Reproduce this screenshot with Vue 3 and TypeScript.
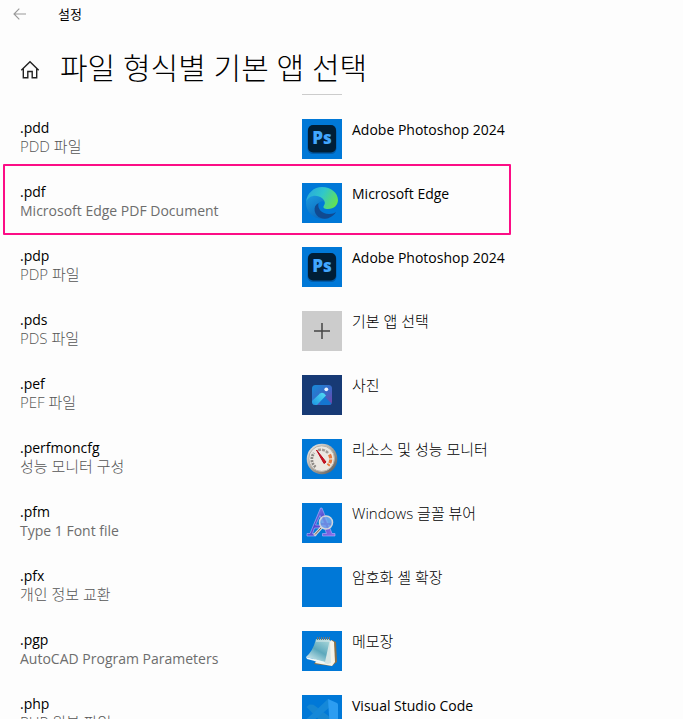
<script setup lang="ts">
type IconName = 'photoshop' | 'edge' | 'plus' | 'photos' | 'gauge' | 'font' | 'blank' | 'notepad' | 'vscode'

interface Association {
  ext: string
  description: string
  app: string
  icon: IconName
  highlighted?: boolean
}

const associations: Association[] = [
  { ext: '.pdd', description: 'PDD 파일', app: 'Adobe Photoshop 2024', icon: 'photoshop' },
  { ext: '.pdf', description: 'Microsoft Edge PDF Document', app: 'Microsoft Edge', icon: 'edge', highlighted: true },
  { ext: '.pdp', description: 'PDP 파일', app: 'Adobe Photoshop 2024', icon: 'photoshop' },
  { ext: '.pds', description: 'PDS 파일', app: '기본 앱 선택', icon: 'plus' },
  { ext: '.pef', description: 'PEF 파일', app: '사진', icon: 'photos' },
  { ext: '.perfmoncfg', description: '성능 모니터 구성', app: '리소스 및 성능 모니터', icon: 'gauge' },
  { ext: '.pfm', description: 'Type 1 Font file', app: 'Windows 글꼴 뷰어', icon: 'font' },
  { ext: '.pfx', description: '개인 정보 교환', app: '암호화 셸 확장', icon: 'blank' },
  { ext: '.pgp', description: 'AutoCAD Program Parameters', app: '메모장', icon: 'notepad' },
  { ext: '.php', description: 'PHP 원본 파일', app: 'Visual Studio Code', icon: 'vscode' },
]

const isKorean = (text: string): boolean => /[가-힣]/.test(text)
</script>

<template>
  <div class="window">
    <header class="titlebar">
      <button class="back" type="button" aria-label="뒤로">
        <svg width="14" height="12" viewBox="0 0 14 12" fill="none" stroke="#999" stroke-width="1.1">
          <path d="M13 6H1M6.300 .7 1 6l5.300 5.300" />
        </svg>
      </button>
      <span class="app-name">설정</span>
    </header>

    <div class="heading">
      <button class="home" type="button" aria-label="홈">
        <svg width="20" height="20" viewBox="0 0 20 20" fill="none" stroke="#222" stroke-width="1.4">
          <path d="M1.300 10.300 10 1.800l8.700 8.500M3.300 8.800v9h4.500v-6.300h4.400v6.300h4.500v-9" />
        </svg>
      </button>
      <h1>파일 형식별 기본 앱 선택</h1>
    </div>

    <main class="list">
      <div class="tile-edge"></div>
      <ul>
        <li v-for="item in associations" :key="item.ext" class="row" :class="{ highlighted: item.highlighted }">
          <div class="type">
            <span class="ext">{{ item.ext }}</span>
            <span class="description" :class="{ korean: isKorean(item.description) }">{{ item.description }}</span>
          </div>
          <button class="app" type="button">
            <span class="tile" :class="item.icon">
              <svg v-if="item.icon === 'photoshop'" width="40" height="40" viewBox="0 0 40 40">
                <rect x="5.500" y="7" width="29" height="28" rx="5.500" fill="#00488b" opacity=".6" />
                <rect x="6" y="6" width="28" height="27.500" rx="5" fill="#001e36" />
                <text x="20" y="25" text-anchor="middle" class="ps" fill="#42a6ff">Ps</text>
              </svg>
              <svg v-else-if="item.icon === 'edge'" width="40" height="40" viewBox="0 0 40 40">
                <defs>
                  <linearGradient id="edge-top" x1="0" y1=".3" x2="1" y2=".7">
                    <stop offset="0" stop-color="#28a8dc" />
                    <stop offset=".45" stop-color="#30c7cb" />
                    <stop offset="1" stop-color="#67e34b" />
                  </linearGradient>
                  <linearGradient id="edge-left" x1="0" y1="0" x2=".6" y2="1">
                    <stop offset="0" stop-color="#1b9be0" />
                    <stop offset="1" stop-color="#0b68bd" />
                  </linearGradient>
                </defs>
                <path d="M4 20c.5-6 6-9 11-8 6 0 9 4 8 7-4-2-8 1-8 6 0 6 5 10 12 10-13 4-23-5-23-15z" fill="url(#edge-left)" />
                <path d="M16.500 20c-1.500 6 4 11.500 11 11 3 0 5-1 6.500-2C31 34 25 37 19 35c-7-2-9-12-2.500-15z" fill="#104a91" />
                <path d="M4 19C5 10 12 4 20 4c9 0 16 6 16 13 0 5-4 9-10 9-4 0-5.500-1.500-4-3.500 1.500-2 1-5-1.500-7C15 11 7 12 4 19z" fill="url(#edge-top)" />
              </svg>
              <svg v-else-if="item.icon === 'plus'" width="40" height="40" viewBox="0 0 40 40">
                <path d="M12 20h16M20 12v16" stroke="#444" stroke-width="1.500" />
              </svg>
              <svg v-else-if="item.icon === 'photos'" width="40" height="40" viewBox="0 0 40 40">
                <defs>
                  <linearGradient id="photo-bg" x1="0" y1="0" x2="1" y2="1">
                    <stop offset="0" stop-color="#168bd8" />
                    <stop offset=".55" stop-color="#3a67c5" />
                    <stop offset="1" stop-color="#7642a9" />
                  </linearGradient>
                  <linearGradient id="photo-hill" x1="1" y1="0" x2="0" y2="1">
                    <stop offset="0" stop-color="#55dff5" />
                    <stop offset="1" stop-color="#168ee0" />
                  </linearGradient>
                  <clipPath id="photo-clip"><rect x="10" y="10" width="20" height="20" rx="3.500" /></clipPath>
                </defs>
                <g clip-path="url(#photo-clip)">
                  <path d="M10 10h20v20H10z" fill="url(#photo-bg)" />
                  <path d="m19 18 13 13H18z" fill="#1476d0" />
                  <path d="m9 27 9-8.500q2-1.500 4 0l2 2L14 31H9z" fill="url(#photo-hill)" />
                </g>
                <circle cx="24.300" cy="14.300" r="1.900" fill="#edf4ff" />
              </svg>
              <svg v-else-if="item.icon === 'gauge'" width="40" height="40" viewBox="0 0 40 40">
                <defs>
                  <linearGradient id="gauge-rim" x1="0" y1="0" x2="1" y2="1">
                    <stop offset="0" stop-color="#f5f5f3" />
                    <stop offset=".6" stop-color="#99958e" />
                    <stop offset="1" stop-color="#51504f" />
                  </linearGradient>
                </defs>
                <circle cx="20" cy="20" r="15.300" fill="url(#gauge-rim)" />
                <circle cx="19.600" cy="19.600" r="12.800" fill="#ebe8e2" stroke="#b8b2a9" />
                <path d="M13.500 28A10 10 0 0 1 12 14" fill="none" stroke="#8c8985" stroke-width="2.800" stroke-dasharray="2 1" />
                <path d="M16 11a10 10 0 0 1 10 3" fill="none" stroke="#a39c95" stroke-width="2.500" stroke-dasharray="3 1" />
                <path d="M27.500 15.500q3 6-1.500 11" fill="none" stroke="#e77a3f" stroke-width="3.200" stroke-dasharray="4 1" />
                <path d="m14.500 11 9.500 12-2 1.500z" fill="#d01722" stroke="#b5091b" />
              </svg>
              <svg v-else-if="item.icon === 'font'" width="40" height="40" viewBox="0 0 40 40">
                <defs>
                  <linearGradient id="font-a" x1="0" y1="0" x2="1" y2="1">
                    <stop offset="0" stop-color="#a8a9ff" />
                    <stop offset=".45" stop-color="#5149ce" />
                    <stop offset="1" stop-color="#9270e7" />
                  </linearGradient>
                </defs>
                <path d="M18.500 5h1.500L30 30.500h3V33H20.500v-2.500h4L22.500 25h-10l-2 5.500H14V33H5v-2.500h3zM13.500 22h8L18 12.500z" fill="url(#font-a)" stroke="#b7b7fc" stroke-width=".6" />
                <path d="m19 25-6 6.500" stroke="#d0d2d9" stroke-width="3" stroke-linecap="round" />
                <path d="m19 25-6 6.500" stroke="#77644e" stroke-width="1" />
                <circle cx="24" cy="19.500" r="6.500" fill="#76a9ed" fill-opacity=".85" stroke="#d1d5dc" stroke-width="1.500" />
                <path d="m21 14 5 11M19 21h10" fill="none" stroke="#6372d4" opacity=".45" stroke-width="2" />
              </svg>
              <svg v-else-if="item.icon === 'notepad'" width="40" height="40" viewBox="0 0 40 40">
                <defs>
                  <linearGradient id="note-page" x1=".8" y1="0" x2=".2" y2="1">
                    <stop offset="0" stop-color="#a6d5d9" />
                    <stop offset=".5" stop-color="#5ca8bc" />
                    <stop offset="1" stop-color="#d7edf0" />
                  </linearGradient>
                </defs>
                <path d="m30 9 4 2 1 20-5 4-18-2z" fill="#8a7047" />
                <path d="m29 9 3 2 1 20-3 4-17-3z" fill="#f6f4e9" />
                <path d="m28 10 1 22-3 1-14-3 5-20z" fill="#d5e5e4" />
                <path d="M14 8h14L23 31 4 26q7-6 10-18z" fill="url(#note-page)" />
                <path d="m4 26 19 5-1 1.500L5 28z" fill="#f2f9f9" />
                <path d="M15 7.500h14" stroke="#6e787b" stroke-width="3" stroke-dasharray="1 1" />
                <path d="M14 10h14" stroke="#e0eceb" stroke-width="1" />
              </svg>
              <svg v-else-if="item.icon === 'vscode'" width="40" height="40" viewBox="0 0 40 40">
                <path d="m4.500 12 3-2.500 4 .2L36 28v7l-8 1z" fill="#1686d1" />
                <path d="M26 4 8 21 4.500 24l4 3 2-.5L28 12z" fill="#1588d8" />
                <path d="m26 4 9 4q1 .5 1 2v22l-8 4z" fill="#2c9df1" />
              </svg>
            </span>
            <span class="label" :class="{ korean: isKorean(item.app) }">{{ item.app }}</span>
          </button>
        </li>
      </ul>
    </main>
  </div>
</template>

<style>
body {
  background: #fdfdfd;
}
</style>

<style scoped>
.window {
  display: flex;
  flex-direction: column;
  height: 100vh;
  overflow: hidden;
  background: #fdfdfd;
  color: #000;
  font-family: "Open Sans", "Noto Sans CJK KR", sans-serif;
  font-size: 14px;
  line-height: 20px;
}

button {
  border: 0;
  padding: 0;
  background: none;
  color: inherit;
  font: inherit;
  text-align: left;
}

svg {
  display: block;
}

.titlebar {
  display: flex;
  align-items: center;
  height: 28px;
  padding-left: 13px;
}

.back {
  width: 45px;
}

.app-name {
  font-size: 13px;
}

.heading {
  display: flex;
  align-items: center;
  gap: 20px;
  height: 66px;
  padding: 0 20px;
}

.home {
  padding-top: 18px;
}

h1 {
  margin: 0;
  padding-top: 14px;
  font-size: 30px;
  font-weight: 300;
  line-height: 40px;
  white-space: nowrap;
}

.list {
  flex: 1;
  min-height: 0;
  overflow: hidden;
}

.tile-edge {
  width: 40px;
  height: 1px;
  margin: 0 0 24px 302px;
  background: #ccc;
}

ul {
  margin: 0;
  padding: 0;
  list-style: none;
}

.row {
  position: relative;
  display: grid;
  grid-template-columns: 282px 1fr;
  height: 64px;
  padding-left: 20px;
}

.highlighted::after {
  content: "";
  position: absolute;
  top: -19px;
  left: 3px;
  box-sizing: border-box;
  width: 508px;
  height: 71px;
  border: 2px solid #fc0d86;
  border-radius: 1px;
  pointer-events: none;
}

.type {
  display: flex;
  flex-direction: column;
  line-height: 18px;
}

.ext,
.description {
  height: 19px;
  white-space: nowrap;
}

.description {
  color: #6d6d6d;
}

.app {
  display: flex;
  align-items: flex-start;
  gap: 10px;
}

.tile {
  width: 40px;
  height: 40px;
  background: #0078d7;
}

.tile.plus {
  background: #ccc;
}

.tile.photos {
  background: #173a75;
}

.ps {
  font-size: 17px;
  font-weight: 800;
}

.label {
  padding-top: 1px;
  white-space: nowrap;
}

.korean {
  font-size: 15px;
  font-weight: 300;
}

.description.korean {
  color: #555;
  line-height: 17px;
}

.label.korean {
  line-height: 19px;
}
</style>
